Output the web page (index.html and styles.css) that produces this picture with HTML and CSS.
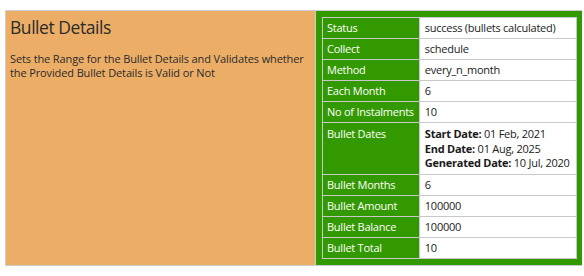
FILE: index.html
```html
<!DOCTYPE html>
<html lang="en">
<head>
<meta charset="utf-8">
<title>Bullet Details</title>
<link rel="stylesheet" href="styles.css">
</head>
<body>
<div class="card">
  <div class="info">
    <h2 class="info-title">Bullet Details</h2>
    <p class="info-text">Sets the Range for the Bullet Details and Validates whether the Provided Bullet Details is Valid or Not</p>
  </div>
  <div class="result">
    <table class="result-table">
      <tr><th>Status</th><td>success (bullets calculated)</td></tr>
      <tr><th>Collect</th><td>schedule</td></tr>
      <tr><th>Method</th><td>every_n_month</td></tr>
      <tr><th>Each Month</th><td>6</td></tr>
      <tr><th>No of Instalments</th><td>10</td></tr>
      <tr class="dates-row">
        <th>Bullet Dates</th>
        <td>
          <div><b>Start Date:</b> 01 Feb, 2021</div>
          <div><b>End Date:</b> 01 Aug, 2025</div>
          <div><b>Generated Date:</b> 10 Jul, 2020</div>
        </td>
      </tr>
      <tr><th>Bullet Months</th><td>6</td></tr>
      <tr><th>Bullet Amount</th><td>100000</td></tr>
      <tr><th>Bullet Balance</th><td>100000</td></tr>
      <tr><th>Bullet Total</th><td>10</td></tr>
    </table>
  </div>
</div>
</body>
</html>
```

FILE: styles.css
```css
html, body {
  margin: 0;
  padding: 0;
  background: #ffffff;
}

body {
  padding: 10px 0 0 5px;
  font-family: "Open Sans", "Liberation Sans", sans-serif;
  color: #2b2b2b;
}

.card {
  display: flex;
  width: 577px;
  height: 256px;
  box-sizing: border-box;
  border: 1px solid #cccccc;
  border-right: none;
}

.info {
  width: 310px;
  flex: none;
  background: #ecae67;
  border-right: 1px solid #cccccc;
  padding: 0 2px 0 4px;
  box-sizing: border-box;
}

.info-title {
  margin: 4px 0 0 0;
  font-size: 17.5px;
  font-weight: normal;
  line-height: 24px;
  letter-spacing: -0.45px;
}

.info-text {
  margin: 13px 0 0 0;
  font-size: 11px;
  line-height: 14px;
  letter-spacing: -0.12px;
}

.result {
  flex: 1;
  background: #339900;
  padding: 6px 5px 4px 6px;
}

.result-table {
  width: 100%;
  border-collapse: collapse;
  font-size: 11px;
  letter-spacing: -0.25px;
}

.result-table th,
.result-table td {
  border: 1px solid #c8c8c8;
  padding: 0 5px;
  height: 20px;
  line-height: 14px;
  text-align: left;
  vertical-align: middle;
}

.result-table th {
  width: 86px;
  color: #ffffff;
  font-weight: normal;
  white-space: nowrap;
  padding-left: 4px;
}

.result-table td {
  background: #ffffff;
  color: #1a1a1a;
}

.dates-row th,
.dates-row td {
  vertical-align: top;
  padding-top: 4px;
  padding-bottom: 3px;
  line-height: 14.5px;
  white-space: nowrap;
}
```
